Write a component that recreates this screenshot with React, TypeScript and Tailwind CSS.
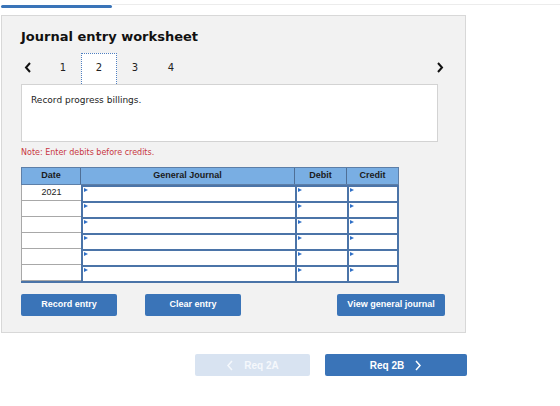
import React from "react";

const Tri = () => (
  <div className="absolute left-[1px] top-[1px] w-0 h-0 border-t-[2px] border-b-[2px] border-l-[4px] border-t-transparent border-b-transparent border-l-[#2f6fc6]" />
);

const ChevL = ({ c = "#111", w = 2 }: { c?: string; w?: number }) => (
  <svg width="8" height="11" viewBox="0 0 8 11">
    <polyline points="6,1 2,5.5 6,10" fill="none" stroke={c} strokeWidth={w} />
  </svg>
);
const ChevR = ({ c = "#111", w = 2 }: { c?: string; w?: number }) => (
  <svg width="8" height="11" viewBox="0 0 8 11">
    <polyline points="2,1 6,5.5 2,10" fill="none" stroke={c} strokeWidth={w} />
  </svg>
);

export default function App() {
  const rows = ["2021", "", "", "", "", ""];
  return (
    <div className="w-[560px] h-[406px] bg-white" style={{ fontFamily: "'DejaVu Sans', Verdana, sans-serif" }}>
      <div className="flex h-[15px]">
        <div className="w-[112px] pt-[5px] pl-[1px]">
          <div className="h-[3px] bg-[#3a74b8] rounded-sm" />
        </div>
        <div className="flex-1 mt-[4px] border-t border-[#ececec] h-0" />
      </div>

      <div className="ml-[1px] w-[465px] h-[318px] border border-[#d8d8d8] bg-[#f2f2f2] pl-[19px] pt-[11px]">
        <div className="h-[20px] leading-[20px] text-[13px] font-bold text-[#111]">Journal entry worksheet</div>

        <div className="mt-[6px] flex h-[31px] items-center w-[423px]">
          <div className="w-[24px] pl-[3px] flex items-center pb-[3px]">
            <ChevL />
          </div>
          {["1", "2", "3", "4"].map((n) => (
            <div
              key={n}
              className={
                "w-[36px] h-[31px] flex items-center justify-center pb-[3px] text-[10px] text-[#222] " +
                (n === "2" ? "bg-white border border-dotted border-[#4f7fc0] border-b-0" : "")
              }
            >
              {n}
            </div>
          ))}
          <div className="flex-1" />
          <div className="pb-[3px] flex items-center">
            <ChevR />
          </div>
        </div>

        <div className="w-[417px] h-[58px] bg-white border border-[#d3d3d3] pl-[9px] pt-[9px] text-[9px] text-[#222]">
          Record progress billings.
        </div>

        <div className="mt-[5px] h-[12px] leading-[12px] text-[8px] text-[#c8373f]">Note: Enter debits before credits.</div>

        <div className="mt-[8px] w-[378px]" style={{ fontFamily: "'Liberation Sans', Arial, sans-serif" }}>
          <div className="flex h-[18px] bg-[#79aee3] border border-[#5d7fa8] text-[9px] font-bold text-[#1b1b1b]">
            <div className="w-[59px] flex items-center justify-center border-r border-[#4f6f96]">Date</div>
            <div className="w-[214px] flex items-center justify-center border-r border-[#4f6f96]">General Journal</div>
            <div className="w-[52px] flex items-center justify-center border-r border-[#4f6f96]">Debit</div>
            <div className="flex-1 flex items-center justify-center">Credit</div>
          </div>
          <div className="border-b-2 border-[#4b74a8]">
            {rows.map((d, i) => (
              <div key={i} className="flex h-[16px]">
                <div className="w-[60px] bg-white border-l border-b border-[#a8a8a8] text-[9px] text-[#222] flex items-center justify-center">
                  {d}
                </div>
                <div className="relative w-[214px] bg-white border-t-2 border-l-2 border-[#4b74a8]">
                  <Tri />
                </div>
                <div className="relative w-[52px] bg-white border-t-2 border-l-2 border-[#4b74a8]">
                  <Tri />
                </div>
                <div className="relative flex-1 bg-white border-t-2 border-l-2 border-r-2 border-[#4b74a8]">
                  <Tri />
                </div>
              </div>
            ))}
          </div>
        </div>

        <div className="mt-[11px] flex h-[22px] text-[9px] font-bold text-white" style={{ fontFamily: "'Liberation Sans', Arial, sans-serif" }}>
          <div className="w-[96px] bg-[#3a74b8] rounded-[2px] flex items-center justify-center">Record entry</div>
          <div className="ml-[28px] w-[96px] bg-[#3a74b8] rounded-[2px] flex items-center justify-center">Clear entry</div>
          <div className="ml-[96px] w-[108px] bg-[#3a74b8] rounded-[2px] flex items-center justify-center">View general journal</div>
        </div>
      </div>

      <div className="mt-[21px] flex h-[22px] text-[10px] font-bold text-white" style={{ fontFamily: "'Liberation Sans', Arial, sans-serif" }}>
        <div className="ml-[195px] w-[115px] bg-[#d8e3f1] rounded-[2px] flex items-center justify-center gap-[10px] text-[#f5f8fc]">
          <ChevL c="#f5f8fc" w={1.5} />
          <span>Req 2A</span>
        </div>
        <div className="ml-[15px] w-[142px] bg-[#3a74b8] rounded-[2px] flex items-center justify-center gap-[10px]">
          <span>Req 2B</span>
          <ChevR c="#ffffff" w={1.5} />
        </div>
      </div>
    </div>
  );
}
